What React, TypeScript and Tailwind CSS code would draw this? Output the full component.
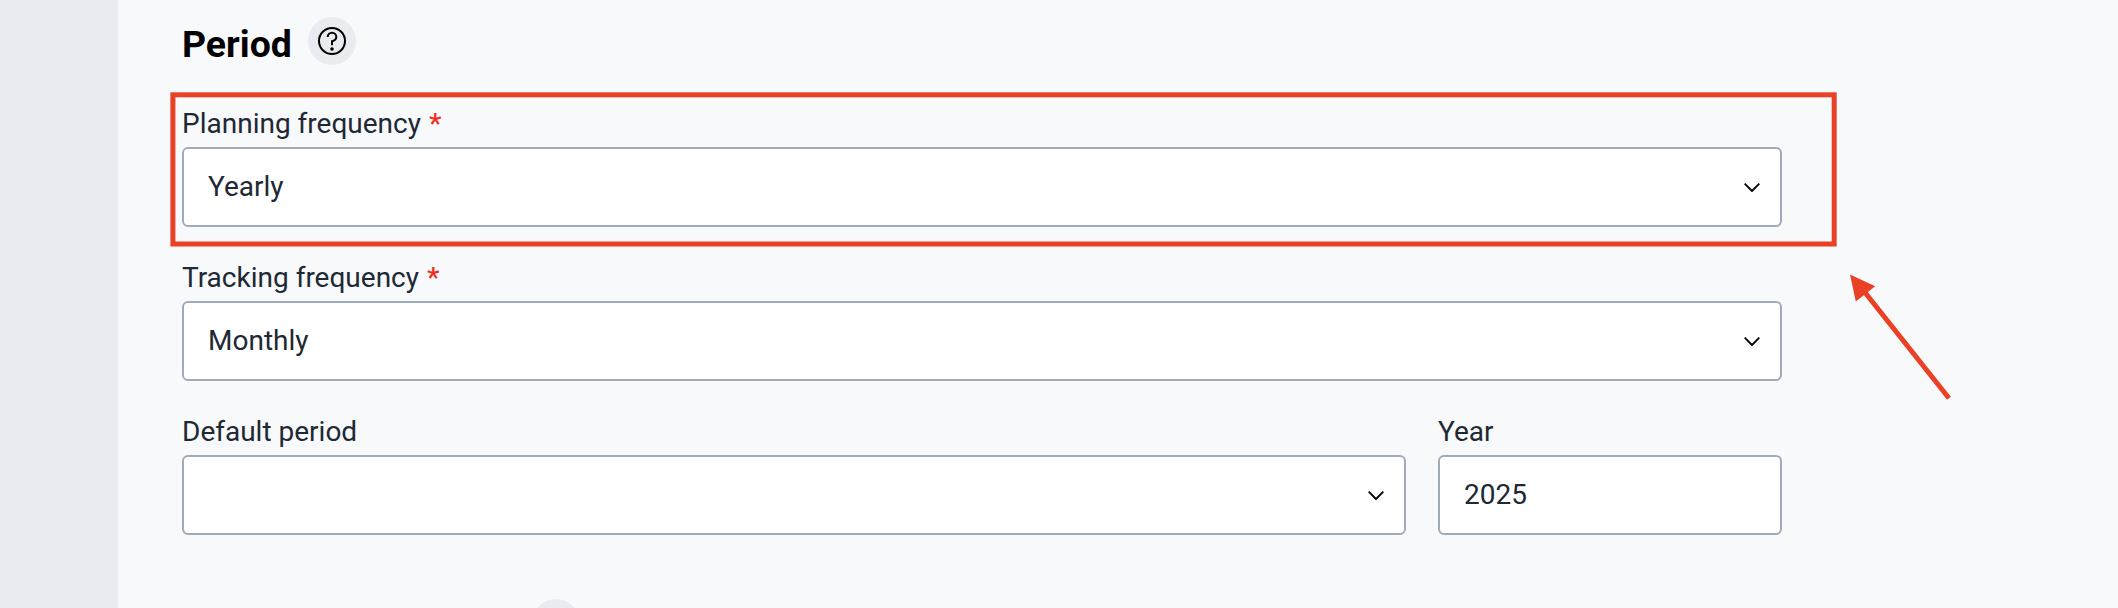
import type { ReactNode } from "react";

function Chevron() {
  return (
    <svg className="h-4 w-4 shrink-0" viewBox="0 0 16 16" fill="none" stroke="#000" strokeWidth="1.8" strokeLinejoin="round">
      <path d="M0.7 4.7 8 12 15.3 4.7" />
    </svg>
  );
}

function Field({ label, required, className = "", children }: { label: string; required?: boolean; className?: string; children?: ReactNode }) {
  return (
    <div className={className}>
      <div className="mb-[3px] h-10 leading-10">
        {label}
        {required && <span className="ml-2 font-medium text-[#f02c1c]">*</span>}
      </div>
      <div className="flex h-20 items-center justify-between rounded-[6px] border-2 border-[#a0abba] bg-white pr-5 pl-6">{children}</div>
    </div>
  );
}

function SelectValue({ value }: { value: string }) {
  return (
    <>
      <span className="leading-10">{value}</span>
      <Chevron />
    </>
  );
}

export default function App() {
  return (
    <div className="relative flex h-[608px] w-[2118px] overflow-hidden bg-[#f8f9fb] font-['Roboto',sans-serif] text-[28px] text-[#202833]">
      <aside className="w-[118px] shrink-0 bg-gradient-to-r from-[#e8ecf0] to-[#e8ebf0]" />
      <main className="w-[1664px] pl-16">
        <header className="flex h-[104px] gap-4 pt-[17px]">
          <h2 className="w-[110px] pt-[3px] text-[37.4px] leading-[48px] font-bold text-black">Period</h2>
          <div className="flex h-12 w-12 items-center justify-center rounded-full bg-[#e8ebf0]">
            <svg className="h-7 w-7" viewBox="0 0 28 28" fill="none" stroke="#000" strokeWidth="2">
              <circle cx="14" cy="14" r="13" />
              <path d="M9.7 9.9a4.3 4.2 0 0 1 8.6 0c0 2.6-1.8 3.7-4.3 4.3v4.1" />
              <circle cx="14" cy="22" r="1.8" fill="#000" stroke="none" />
            </svg>
          </div>
        </header>
        <div className="flex flex-col gap-[31px]">
          <Field label="Planning frequency" required>
            <SelectValue value="Yearly" />
          </Field>
          <Field label="Tracking frequency" required>
            <SelectValue value="Monthly" />
          </Field>
          <div className="flex gap-8">
            <Field label="Default period" className="w-[1224px]">
              <SelectValue value="" />
            </Field>
            <Field label="Year" className="w-[344px]">
              <span className="leading-10">2025</span>
            </Field>
          </div>
        </div>
        <div className="mt-16 ml-[350px] h-12 w-12 rounded-full bg-[#e8ebf0]" />
      </main>
      <svg className="absolute inset-0 h-[608px] w-[2118px]" viewBox="0 0 2118 608" fill="none">
        <rect x="172.9" y="94.8" width="1661.3" height="149.2" stroke="#ea4025" strokeWidth="5" />
        <path d="M1865 292.5 1949 398.3" stroke="#ea4025" strokeWidth="5" />
        <path d="M1850 274.5 1875.2 286.2 1855.8 301.5Z" fill="#ea4025" />
      </svg>
    </div>
  );
}
